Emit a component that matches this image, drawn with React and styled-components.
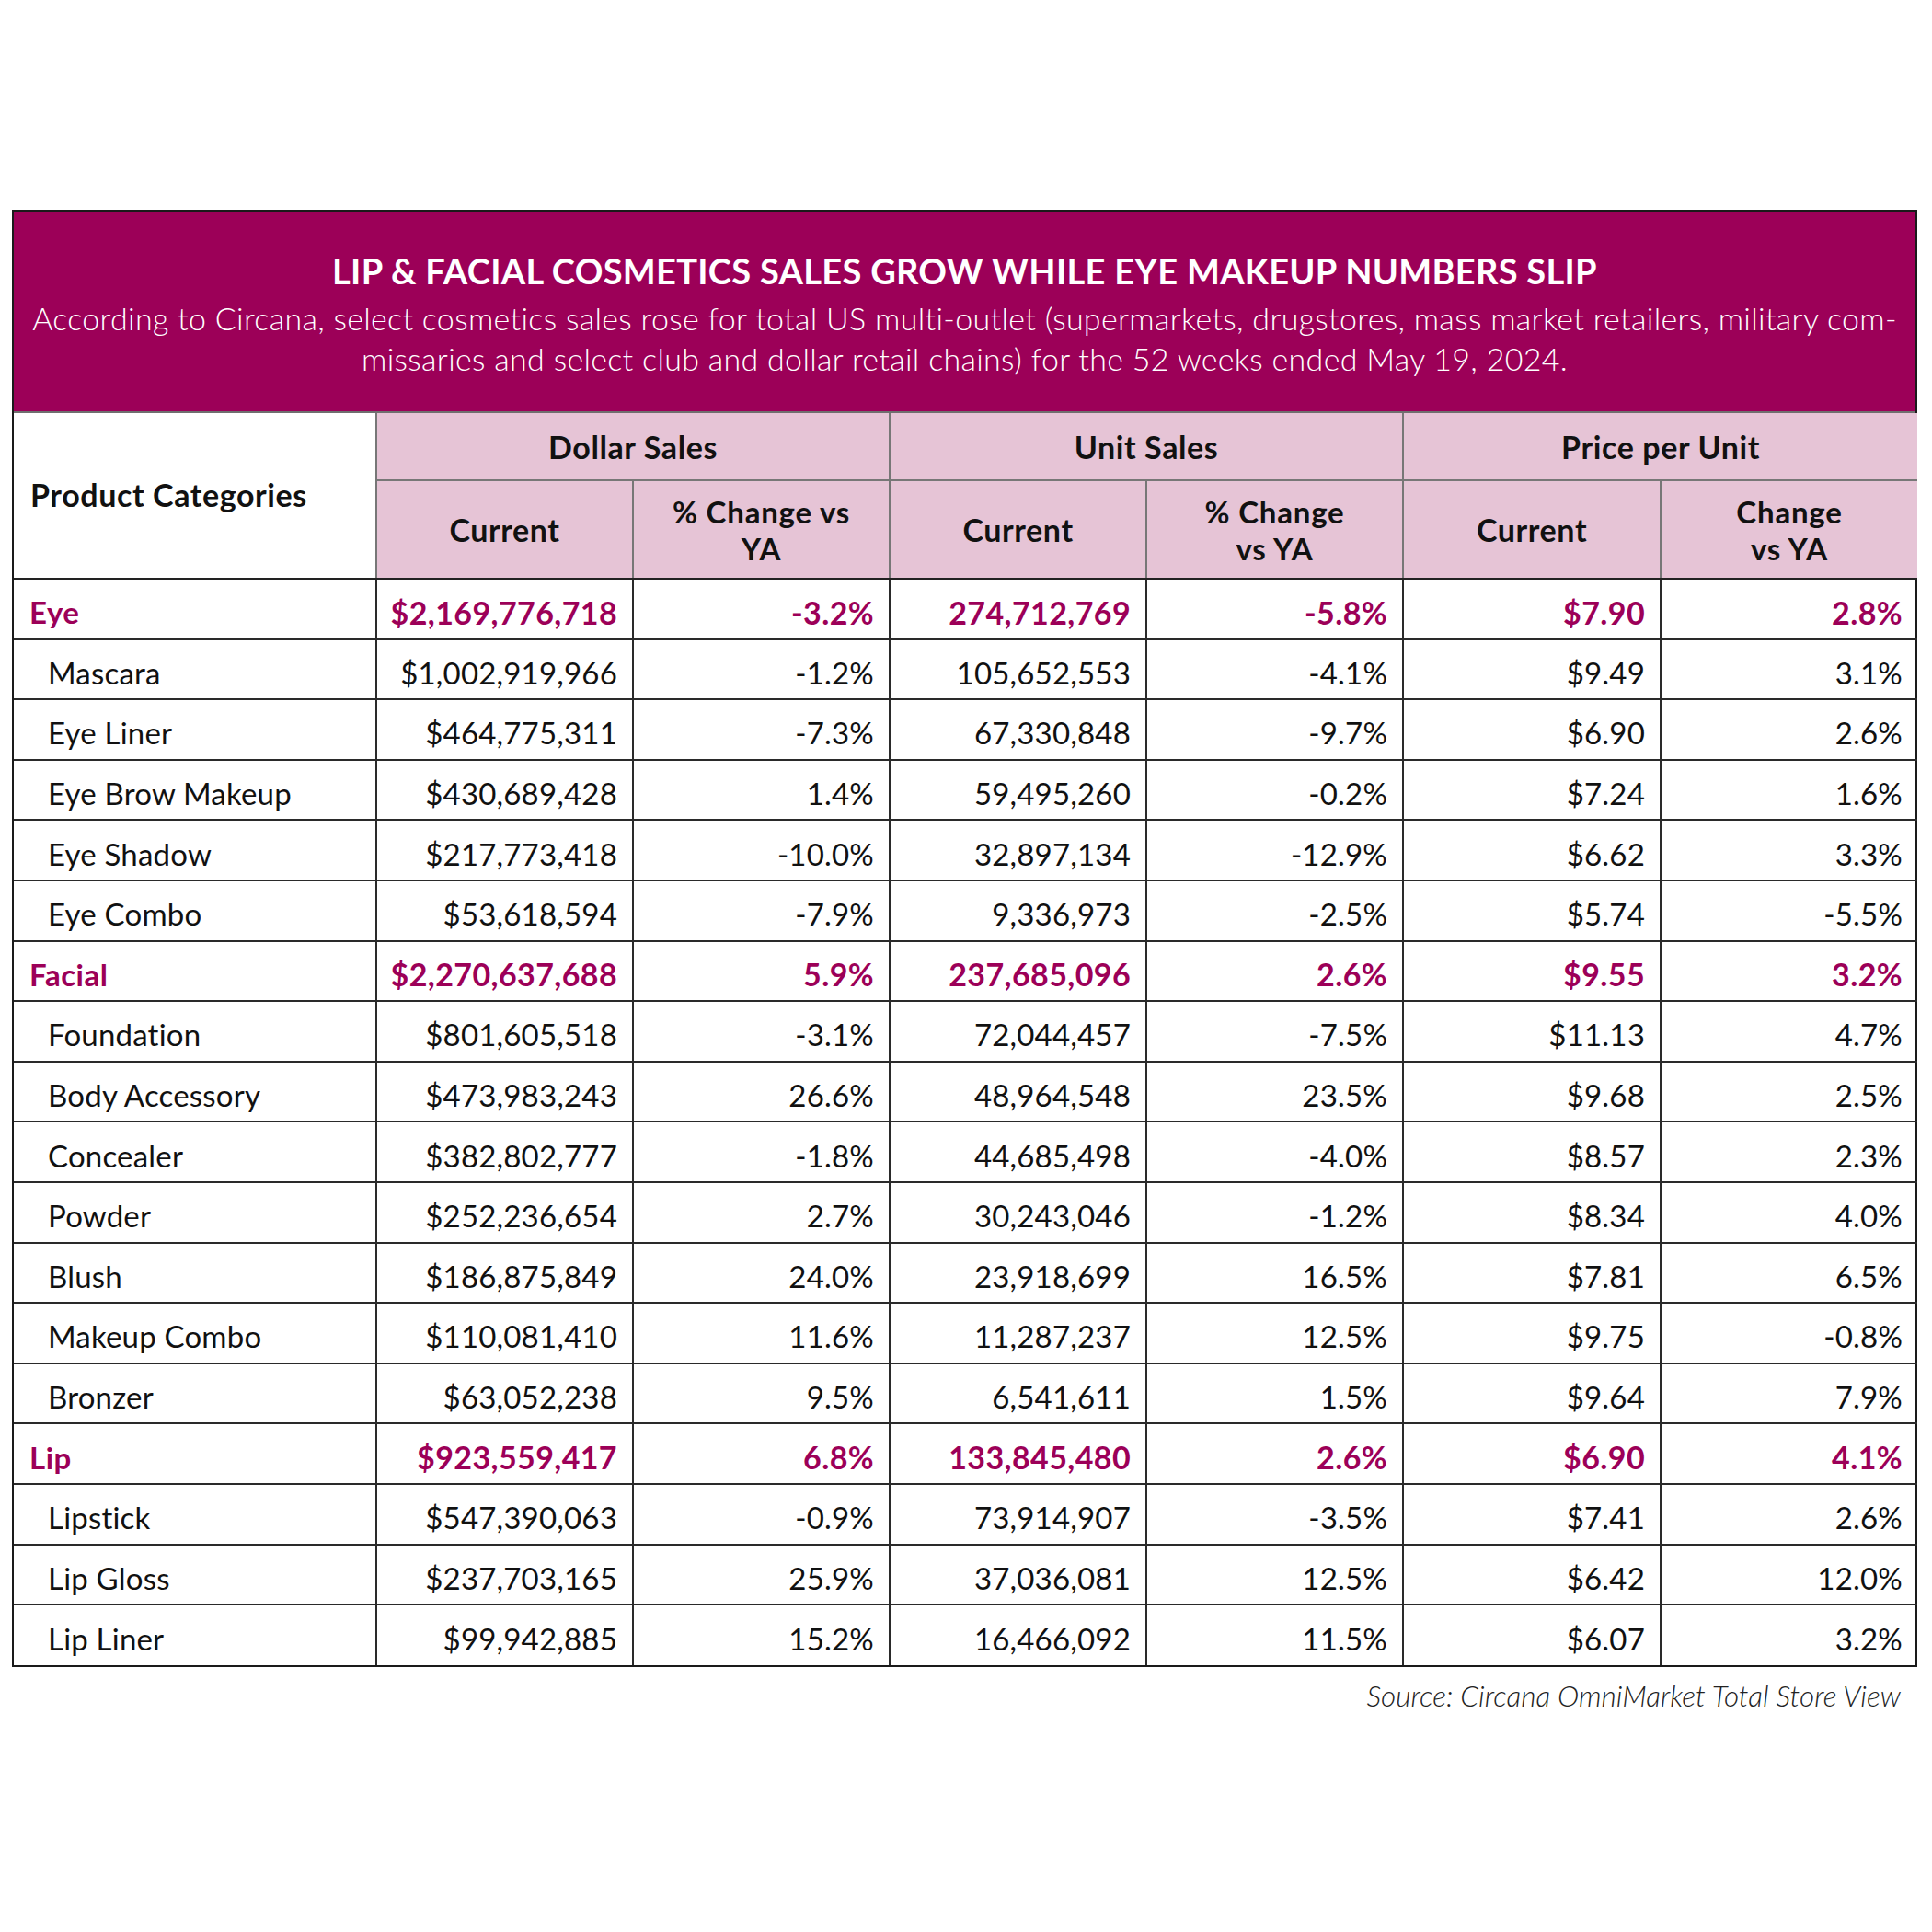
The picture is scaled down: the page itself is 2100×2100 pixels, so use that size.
import styled, { createGlobalStyle } from "styled-components";

const GlobalStyle = createGlobalStyle`
    html, body
    {
        margin: 0;
        padding: 0;
        background: #ffffff;
    }
    body
    {
        font-family: "Lato", "Open Sans", sans-serif;
        color: #111;
    }
`;

const MAGENTA = "#9c0058";
const PINK = "#e6c4d6";

const groups = [
    {
        name: "Eye",
        total: ["$2,169,776,718", "-3.2%", "274,712,769", "-5.8%", "$7.90", "2.8%"],
        items: [
            ["Mascara", "$1,002,919,966", "-1.2%", "105,652,553", "-4.1%", "$9.49", "3.1%"],
            ["Eye Liner", "$464,775,311", "-7.3%", "67,330,848", "-9.7%", "$6.90", "2.6%"],
            ["Eye Brow Makeup", "$430,689,428", "1.4%", "59,495,260", "-0.2%", "$7.24", "1.6%"],
            ["Eye Shadow", "$217,773,418", "-10.0%", "32,897,134", "-12.9%", "$6.62", "3.3%"],
            ["Eye Combo", "$53,618,594", "-7.9%", "9,336,973", "-2.5%", "$5.74", "-5.5%"],
        ],
    },
    {
        name: "Facial",
        total: ["$2,270,637,688", "5.9%", "237,685,096", "2.6%", "$9.55", "3.2%"],
        items: [
            ["Foundation", "$801,605,518", "-3.1%", "72,044,457", "-7.5%", "$11.13", "4.7%"],
            ["Body Accessory", "$473,983,243", "26.6%", "48,964,548", "23.5%", "$9.68", "2.5%"],
            ["Concealer", "$382,802,777", "-1.8%", "44,685,498", "-4.0%", "$8.57", "2.3%"],
            ["Powder", "$252,236,654", "2.7%", "30,243,046", "-1.2%", "$8.34", "4.0%"],
            ["Blush", "$186,875,849", "24.0%", "23,918,699", "16.5%", "$7.81", "6.5%"],
            ["Makeup Combo", "$110,081,410", "11.6%", "11,287,237", "12.5%", "$9.75", "-0.8%"],
            ["Bronzer", "$63,052,238", "9.5%", "6,541,611", "1.5%", "$9.64", "7.9%"],
        ],
    },
    {
        name: "Lip",
        total: ["$923,559,417", "6.8%", "133,845,480", "2.6%", "$6.90", "4.1%"],
        items: [
            ["Lipstick", "$547,390,063", "-0.9%", "73,914,907", "-3.5%", "$7.41", "2.6%"],
            ["Lip Gloss", "$237,703,165", "25.9%", "37,036,081", "12.5%", "$6.42", "12.0%"],
            ["Lip Liner", "$99,942,885", "15.2%", "16,466,092", "11.5%", "$6.07", "3.2%"],
        ],
    },
];

// two-line column headings, kept as separate lines like the print layout
const HeadLines = ({ lines }) => lines.map((l) => <HeadLine key={l}>{l}</HeadLine>);

export default function App()
{
    return (
        <Page>
            <GlobalStyle />
            <Frame>
                <Banner>
                    <Title>LIP &amp; FACIAL COSMETICS SALES GROW WHILE EYE MAKEUP NUMBERS SLIP</Title>
                    <Subtitle>According to Circana, select cosmetics sales rose for total US multi-outlet (supermarkets, drugstores, mass market retailers, military com-</Subtitle>
                    <Subtitle>missaries and select club and dollar retail chains) for the 52 weeks ended May 19, 2024.</Subtitle>
                </Banner>
                <Table>
                    <colgroup>
                        <col style={{ width: 394 }} />
                        <col style={{ width: 279 }} />
                        <col style={{ width: 279 }} />
                        <col style={{ width: 279 }} />
                        <col style={{ width: 279 }} />
                        <col style={{ width: 280 }} />
                        <col style={{ width: 279 }} />
                    </colgroup>
                    <thead>
                        <GroupRow>
                            <CornerHead rowSpan={2}>Product Categories</CornerHead>
                            <GroupHead colSpan={2}>Dollar Sales</GroupHead>
                            <GroupHead colSpan={2}>Unit Sales</GroupHead>
                            <GroupHead colSpan={2}>Price per Unit</GroupHead>
                        </GroupRow>
                        <SubRow>
                            <SubHead>Current</SubHead>
                            <SubHead><HeadLines lines={["% Change vs", "YA"]} /></SubHead>
                            <SubHead>Current</SubHead>
                            <SubHead><HeadLines lines={["% Change", "vs YA"]} /></SubHead>
                            <SubHead>Current</SubHead>
                            <SubHead><HeadLines lines={["Change", "vs YA"]} /></SubHead>
                        </SubRow>
                    </thead>
                    <tbody>
                        {groups.map((g) => [
                            <DataRow key={g.name}>
                                <NameCell $total>{g.name}</NameCell>
                                {g.total.map((v, i) => <NumCell key={i} $total>{v}</NumCell>)}
                            </DataRow>,
                            ...g.items.map((row) => (
                                <DataRow key={row[0]}>
                                    <NameCell>{row[0]}</NameCell>
                                    {row.slice(1).map((v, i) => <NumCell key={i}>{v}</NumCell>)}
                                </DataRow>
                            )),
                        ])}
                    </tbody>
                </Table>
            </Frame>
            <Source>Source: Circana OmniMarket Total Store View</Source>
        </Page>
    );
}

const Page = styled.div`
    width: 2100px;
    height: 2100px;
    box-sizing: border-box;
    padding: 228px 16px 0 13px;
`;

const Frame = styled.div`
    border: 2px solid #1a1a1a;
    background: #fff;
`;

const Banner = styled.div`
    background-color: ${MAGENTA};
    color: #fff;
    height: 219px;
    box-sizing: border-box;
    padding-top: 42px;
    display: flex;
    flex-direction: column;
    align-items: center;
    border-bottom: 2px solid #6f6f6f;
`;

const Title = styled.div`
    font-weight: 700;
    font-size: 38px;
    line-height: 44px;
    letter-spacing: 0.3px;
    margin-bottom: 8px;
    white-space: nowrap;
`;

const Subtitle = styled.div`
    font-weight: 300;
    font-size: 34px;
    line-height: 44px;
    letter-spacing: 0.3px;
    white-space: nowrap;
`;

const Table = styled.table`
    width: 100%;
    border-collapse: collapse;
    border-style: hidden;
    table-layout: fixed;
`;

const GroupRow = styled.tr`
    height: 73px;
`;

const SubRow = styled.tr`
    height: 107px;
`;

const CornerHead = styled.th`
    background: #fff;
    text-align: left;
    padding: 0 0 2px 18px;
    font-size: 34px;
    font-weight: 700;
    letter-spacing: 0.6px;
    border: 2px solid #777;
    border-bottom-color: #222;
    white-space: nowrap;
`;

const GroupHead = styled.th`
    background: ${PINK};
    font-size: 34px;
    font-weight: 700;
    letter-spacing: 0.6px;
    text-align: center;
    border: 2px solid #777;
    padding: 0;
`;

const SubHead = styled.th`
    background: ${PINK};
    font-size: 34px;
    font-weight: 700;
    letter-spacing: 0.6px;
    text-align: center;
    padding: 0;
    border: 2px solid #777;
    border-bottom-color: #222;
`;

const HeadLine = styled.div`
    font-size: 33px;
    letter-spacing: 0.8px;
    line-height: 40px;
    white-space: nowrap;
`;

const DataRow = styled.tr`
    height: 65.6px;
`;

const NameCell = styled.td`
    border: 2px solid #2a2a2a;
    font-size: 33px;
    font-weight: ${(p) => (p.$total ? 700 : 400)};
    letter-spacing: ${(p) => (p.$total ? "0.5px" : "0.2px")};
    color: ${(p) => (p.$total ? MAGENTA : "#111")};
    padding: 7px 0 0 ${(p) => (p.$total ? "17px" : "37px")};
    white-space: nowrap;
`;

const NumCell = styled.td`
    border: 2px solid #2a2a2a;
    font-size: ${(p) => (p.$total ? "34px" : "33px")};
    font-weight: ${(p) => (p.$total ? 700 : 400)};
    letter-spacing: ${(p) => (p.$total ? "0.4px" : "0.2px")};
    color: ${(p) => (p.$total ? MAGENTA : "#111")};
    text-align: right;
    padding: 7px 16px 0 0;
    white-space: nowrap;
`;

const Source = styled.div`
    text-align: right;
    padding: 12px 18px 0 0;
    font-style: italic;
    font-weight: 300;
    font-size: 31.5px;
    color: #222;
`;
